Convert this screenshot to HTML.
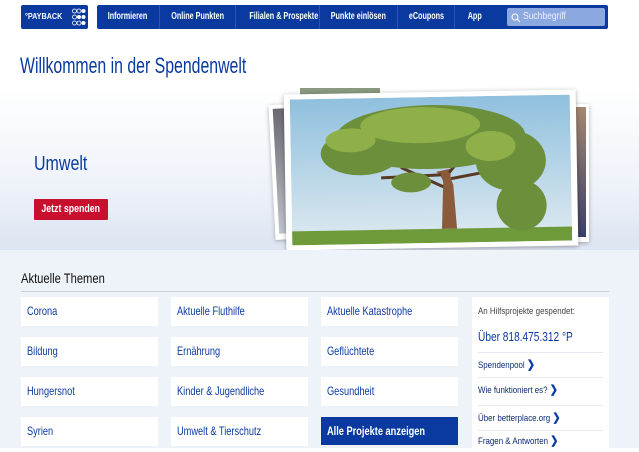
<!DOCTYPE html>
<html><head><meta charset="utf-8"><style>
*{margin:0;padding:0;box-sizing:border-box}
body{width:639px;height:448px;overflow:hidden;background:#fff;font-family:"Liberation Sans",sans-serif;position:relative}
.abs{position:absolute}
.n{display:inline-block;transform:scaleX(.77);transform-origin:left center;white-space:nowrap}
.logo{left:21px;top:5px;width:67px;height:24px;background:#0a3aa0;border-radius:2px;color:#fff;font-size:8px;font-weight:bold}
.nav{left:97px;top:5px;width:511px;height:24px;background:#0a3aa0;border-radius:2px;color:#fff;font-size:10px;font-weight:bold}
.nav .i{position:absolute;top:0;height:24px;line-height:24px;text-align:center;border-right:1px solid #2a55b5;white-space:nowrap}
.nav .i span{display:inline-block;transform:scaleX(.72)}
.search{position:absolute;left:410px;top:3px;width:98px;height:18px;background:#8ca8e0;border-radius:2px;color:#eef;font-weight:normal;font-size:10px;line-height:18px;padding-left:16px}
h1{position:absolute;left:20px;top:53px;font-size:22px;font-weight:normal;color:#0a3aa0}
.hero{left:0;top:88px;width:639px;height:162px;background:linear-gradient(180deg,#fff 0%,#eef2f9 60%,#dde5f2 100%)}
.low{left:0;top:250px;width:639px;height:198px;background:#eef2f9}
.tile{position:absolute;width:137px;height:29px;background:#fff;color:#0a3aa0;font-size:12px;line-height:29px;padding-left:6px}
.tile.b{background:#0a3aa0;color:#fff;font-weight:bold}
.side{left:472px;top:297px;width:137px;height:151px;background:#fff;font-size:9px;color:#333;padding:0 6px}
.side .r{height:21px;line-height:21px;border-bottom:1px solid #e6e9ef;color:#0a2a70}
.side .r span{display:inline-block;transform:scaleX(.88);transform-origin:left}
.side .r b{color:#0a3aa0;font-size:11px}
</style></head><body>
<div class="abs logo"><span style="position:absolute;left:4px;top:7px;transform:scaleX(.9);transform-origin:left">°PAYBACK</span>
<svg style="position:absolute;left:51px;top:3px" width="14" height="18" viewBox="0 0 14 18"><g fill="none" stroke="#fff" stroke-width="0.8"><circle cx="2.5" cy="3" r="2"/><circle cx="7" cy="3" r="2"/><circle cx="2.5" cy="9" r="2"/><circle cx="2.5" cy="15" r="2"/><circle cx="7" cy="15" r="2"/></g><g fill="#fff"><circle cx="11.5" cy="3" r="2"/><circle cx="7" cy="9" r="2"/><circle cx="11.5" cy="9" r="2"/><circle cx="11.5" cy="15" r="2"/></g></svg></div>
<div class="abs nav">
<div class="i" style="left:0;width:63px"><span>Informieren</span></div>
<div class="i" style="left:63px;width:76px"><span>Online Punkten</span></div>
<div class="i" style="left:139px;width:84px"><span>Filialen &amp; Prospekte</span></div>
<div class="i" style="left:223px;width:78px"><span>Punkte einlösen</span></div>
<div class="i" style="left:301px;width:57px"><span>eCoupons</span></div>
<div class="i" style="left:358px;width:40px;border:0"><span>App</span></div>
<div class="search"><span style="display:inline-block;transform:scaleX(.85);transform-origin:left">Suchbegriff</span></div>
<svg style="position:absolute;left:414px;top:8px" width="10" height="10"><circle cx="4" cy="4" r="3" fill="none" stroke="#fff" stroke-width="1"/><line x1="6" y1="6" x2="9" y2="9" stroke="#fff" stroke-width="1"/></svg></div>
<h1><span class="n" style="transform:scaleX(.72)">Willkommen in der Spendenwelt</span></h1>
<div class="abs hero"></div>
<div class="abs" style="left:34px;top:153px;font-size:20px;color:#0a3aa0"><span class="n" style="transform:scaleX(.8)">Umwelt</span></div>
<div class="abs" style="left:34px;top:199px;width:74px;height:21px;background:#c8102e;color:#fff;font-size:11px;font-weight:bold;line-height:21px;text-align:center;border-radius:1px"><span style="display:inline-block;transform:scaleX(.8)">Jetzt spenden</span></div>
<div class="abs" style="left:272px;top:104px;width:40px;height:135px;background:#fff;box-shadow:0 1px 4px rgba(0,0,0,.3);transform:rotate(-3deg)"><div style="margin:4px;height:125px;background:linear-gradient(#6a6a70,#bfc4cc)"></div></div>
<div class="abs" style="left:565px;top:104px;width:24px;height:138px;background:#fff;box-shadow:0 1px 4px rgba(0,0,0,.3)"><div style="margin:3px;height:130px;background:linear-gradient(#a48870,#3a3f6a)"></div></div>
<div class="abs" style="left:300px;top:88px;width:80px;height:10px;background:#8a9a80"></div>
<div class="abs" style="left:285px;top:92px;width:292px;height:156px;background:#fff;box-shadow:0 1px 5px rgba(0,0,0,.35);transform:rotate(-1deg)">
<svg style="position:absolute;left:6px;top:5px" width="280" height="146" viewBox="0 0 280 146">
<defs><linearGradient id="s" x1="0" y1="0" x2="0" y2="1"><stop offset="0" stop-color="#8fc0de"/><stop offset="1" stop-color="#dfeaf0"/></linearGradient></defs>
<rect width="280" height="146" fill="url(#s)"/>
<rect y="132" width="280" height="14" fill="#6e9a3a"/>
<path d="M150 132 L152 85 Q150 78 145 75 L160 72 Q158 80 162 88 L165 132Z" fill="#8a5a3a"/>
<path d="M152 90 L110 70 M160 82 L200 75 M150 78 L90 80 M158 76 L180 50" stroke="#5a3a25" stroke-width="3" fill="none"/>
<g fill="#6b8f3a"><ellipse cx="140" cy="40" rx="95" ry="32"/><ellipse cx="70" cy="55" rx="40" ry="22"/><ellipse cx="220" cy="65" rx="35" ry="30"/><ellipse cx="230" cy="110" rx="25" ry="25"/><ellipse cx="120" cy="85" rx="20" ry="10"/></g>
<g fill="#8fb048"><ellipse cx="130" cy="28" rx="60" ry="18"/><ellipse cx="60" cy="42" rx="25" ry="12"/><ellipse cx="200" cy="50" rx="25" ry="15"/></g>
</svg></div>
<div class="abs low"></div>
<div class="abs" style="left:21px;top:270px;font-size:14px;color:#111"><span class="n" style="transform:scaleX(.8)">Aktuelle Themen</span></div>
<div class="abs" style="left:21px;top:291px;width:588px;height:1px;background:#c8cdd6"></div>
<div class="tile" style="left:21px;top:297px"><span class="n">Corona</span></div>
<div class="tile" style="left:171px;top:297px"><span class="n">Aktuelle Fluthilfe</span></div>
<div class="tile" style="left:321px;top:297px"><span class="n">Aktuelle Katastrophe</span></div>
<div class="tile" style="left:21px;top:337px"><span class="n">Bildung</span></div>
<div class="tile" style="left:171px;top:337px"><span class="n">Ernährung</span></div>
<div class="tile" style="left:321px;top:337px"><span class="n">Geflüchtete</span></div>
<div class="tile" style="left:21px;top:377px"><span class="n">Hungersnot</span></div>
<div class="tile" style="left:171px;top:377px"><span class="n">Kinder &amp; Jugendliche</span></div>
<div class="tile" style="left:321px;top:377px"><span class="n">Gesundheit</span></div>
<div class="tile" style="left:21px;top:417px"><span class="n">Syrien</span></div>
<div class="tile" style="left:171px;top:417px"><span class="n">Umwelt &amp; Tierschutz</span></div>
<div class="tile b" style="left:321px;top:417px;height:28px"><span class="n">Alle Projekte anzeigen</span></div>
<div class="abs side">
<div style="height:28px;line-height:28px;color:#444"><span style="display:inline-block;transform:scaleX(.88);transform-origin:left">An Hilfsprojekte gespendet:</span></div>
<div style="height:28px;line-height:24px;font-size:13px;color:#0a3aa0;border-bottom:1px solid #e6e9ef"><span class="n" style="transform:scaleX(.78)">Über 818.475.312 °P</span></div>
<div class="r" style="height:25px;line-height:25px"><span>Spendenpool <b>❯</b></span></div>
<div class="r" style="height:28px;line-height:25px"><span>Wie funktioniert es? <b>❯</b></span></div>
<div class="r" style="height:25px;line-height:25px"><span>Über betterplace.org <b>❯</b></span></div>
<div class="r" style="border:0"><span>Fragen &amp; Antworten <b>❯</b></span></div>
</div>
</body></html>
